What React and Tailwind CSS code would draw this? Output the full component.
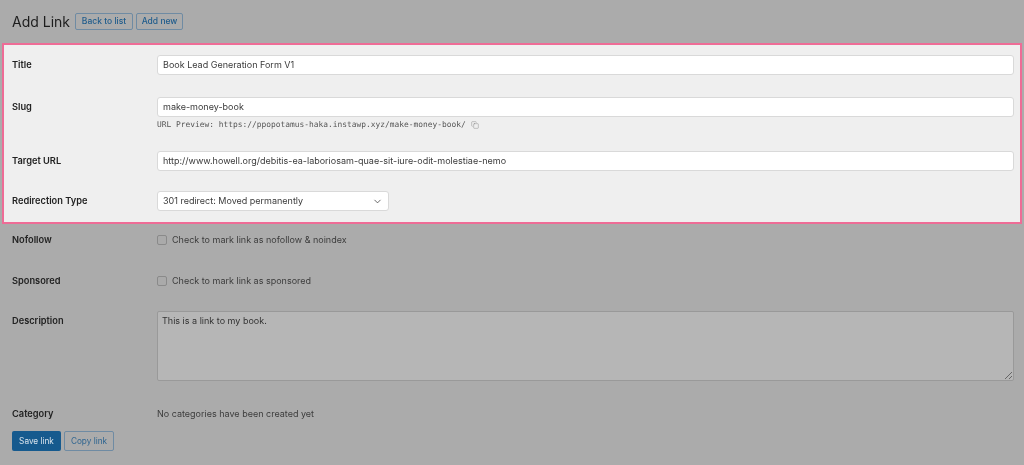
import React from "react";
import { ChevronDown, Copy } from "lucide-react";

const fieldClass =
  "h-5 flex items-center bg-white border border-[#d9d9d9] rounded-[3px] px-[5px] text-[9px] text-[#3a3a3a]";

const Row = ({ label, className = "", children }) => (
  <div className={`flex ${className}`}>
    <div className="w-[145px] shrink-0 text-[9.25px] font-semibold text-[#222] leading-5">{label}</div>
    <div className="flex-1 min-w-0">{children}</div>
  </div>
);

const CheckRow = ({ label, text, className = "" }) => (
  <Row label={label} className={className}>
    <div className="flex items-center h-5 gap-[5px] text-[9px] text-[#3c3c3c]">
      <span className="w-[10px] h-[10px] border border-[#8a8a8a] rounded-[2px] bg-[#aaaaaa]" />
      {text}
    </div>
  </Row>
);

const App = () => {
  return (
    <div className="w-[1024px] h-[465px] overflow-hidden bg-[#ababab] font-['Inter',sans-serif] blur-[0.4px]">
      {/* Page heading */}
      <div className="h-[43px] pl-3 pt-[13px] flex items-start gap-[5px]">
        <h1 className="text-[14px] leading-[17px] text-[#1d1d1d]">Add Link</h1>
        <button className="w-[58px] h-[17px] border border-[#6f8ba3] rounded-[2px] text-[8.5px] font-medium text-[#1f5c8c]">
          Back to list
        </button>
        <button className="w-[47px] h-[17px] -ml-[2px] border border-[#6f8ba3] rounded-[2px] text-[8.5px] font-medium text-[#1f5c8c]">
          Add new
        </button>
      </div>

      {/* Highlighted fields */}
      <div className="mx-[2px] w-[1020px] border-2 border-[#ee6c96] bg-[#efefef] pl-2 pr-[6px] pt-[10px] pb-[11px]">
        <Row label="Title">
          <div className={fieldClass}>Book Lead Generation Form V1</div>
        </Row>
        <Row label="Slug" className="mt-[22px]">
          <div className={fieldClass}>make-money-book</div>
          <div className="mt-[3px] h-[10px] flex items-center gap-[5px] font-['DejaVu_Sans_Mono',monospace] text-[7.9px] text-[#555]">
            URL Preview: https://ppopotamus-haka.instawp.xyz/make-money-book/
            <Copy size={8} strokeWidth={1.2} className="text-[#777]" />
          </div>
        </Row>
        <Row label="Target URL" className="mt-[21px]">
          <div className={fieldClass}>http://www.howell.org/debitis-ea-laboriosam-quae-sit-iure-odit-molestiae-nemo</div>
        </Row>
        <Row label="Redirection Type" className="mt-5">
          <div className={`${fieldClass} w-[232px] justify-between`}>
            301 redirect: Moved permanently
            <ChevronDown size={11} strokeWidth={1.6} className="text-[#333]" />
          </div>
        </Row>
      </div>

      {/* Rest of the form */}
      <div className="pl-3 pr-[10px]">
        <CheckRow label="Nofollow" text="Check to mark link as nofollow & noindex" className="mt-[6px]" />
        <CheckRow label="Sponsored" text="Check to mark link as sponsored" className="mt-[21px]" />
        <Row label="Description" className="mt-5">
          <div className="h-[70px] bg-[#b6b6b6] border border-[#999] rounded-[2px] px-[4px] pt-[2px] text-[9px] leading-[14px] text-[#333] flex flex-col justify-between">
            This is a link to my book.
            <svg width="9" height="9" viewBox="0 0 9 9" className="self-end -mr-[4px] text-[#666]">
              <path d="M1 8 L8 1 M5 8 L8 5" stroke="currentColor" fill="none" strokeWidth="1" />
            </svg>
          </div>
        </Row>
        <Row label="Category" className="mt-[23px]">
          <div className="text-[9px] leading-5 text-[#3c3c3c]">No categories have been created yet</div>
        </Row>
        <div className="mt-[7px] flex gap-[3px]">
          <button className="w-[49px] h-5 rounded-[2px] bg-[#165a8e] text-[8.25px] text-[#d8e3ec]">Save link</button>
          <button className="w-[50px] h-5 rounded-[2px] border border-[#6f8ba3] text-[8.25px] text-[#2f6590]">Copy link</button>
        </div>
      </div>
    </div>
  );
};

export default App;
